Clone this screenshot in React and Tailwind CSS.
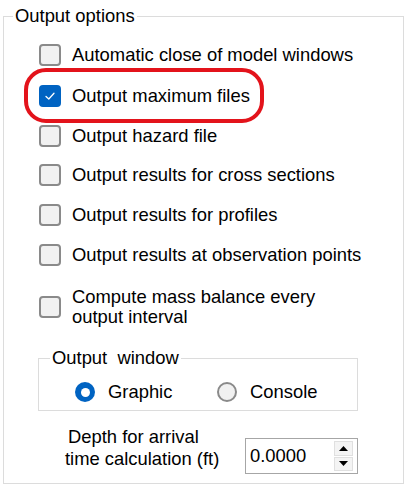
import React from "react";

function CheckBox({ checked }) {
  if (checked) {
    return (
      <span className="flex h-[22px] w-[22px] shrink-0 items-center justify-center rounded-[4px] bg-[#0063c2]">
        <svg width="14" height="14" viewBox="0 0 14 14" fill="none">
          <path d="M3 7.4 L5.8 10 L11 4.2" stroke="#ffffff" strokeWidth="1.3" strokeLinecap="round" strokeLinejoin="round" />
        </svg>
      </span>
    );
  }
  return <span className="block h-[22px] w-[22px] shrink-0 rounded-[4px] border-2 border-[#8a8a8a] bg-[#f1f1f1]" />;
}

function Row({ h, checked, children }) {
  return (
    <div className={`flex items-center ${h}`}>
      <CheckBox checked={checked} />
      <span className="ml-[11px] whitespace-nowrap leading-[22px]">{children}</span>
    </div>
  );
}

function Radio({ checked }) {
  if (checked) {
    return (
      <span className="flex h-[20px] w-[20px] shrink-0 items-center justify-center rounded-full bg-[#0063c2]">
        <span className="block h-[9px] w-[9px] rounded-full bg-white" />
      </span>
    );
  }
  return <span className="block h-[20px] w-[20px] shrink-0 rounded-full border-2 border-[#8a8a8a] bg-[#f1f1f1]" />;
}

export default function App() {
  return (
    <div className="relative h-[488px] w-[419px] overflow-hidden bg-white font-['Liberation_Sans',Arial,sans-serif] text-[18.4px] text-black">
      <div className="pl-[3px] pt-[16px]">
        <div className="relative h-[468px] w-[401px] border border-[#dcdcdc]">
          <span className="absolute left-[9px] top-[-13px] bg-white px-[2px] leading-[24px] whitespace-nowrap">
            Output options
          </span>

          <div className="flex flex-col pl-[35px] pt-[17px]">
            <Row h="h-[41px]">Automatic close of model windows</Row>
            <Row h="h-[41px]" checked>Output maximum files</Row>
            <Row h="h-[39px]">Output hazard file</Row>
            <Row h="h-[40px]">Output results for cross sections</Row>
            <Row h="h-[40px]">Output results for profiles</Row>
            <Row h="h-[40px]">Output results at observation points</Row>
            <div className="mt-[12px] flex h-[40px] items-center">
              <CheckBox />
              <span className="ml-[11px] leading-[20px]">
                Compute mass balance every
                <br />
                output interval
              </span>
            </div>
          </div>

          <div className="relative ml-[34px] mt-[31px] h-[53px] w-[320px] border border-[#dcdcdc]">
            <span className="absolute left-[11px] top-[-13px] bg-white px-[2px] leading-[24px] whitespace-pre">
              {"Output  window"}
            </span>
            <div className="flex items-center pl-[36px] pt-[21px]">
              <div className="flex w-[142px] items-center">
                <Radio checked />
                <span className="ml-[13px] leading-[24px]">Graphic</span>
              </div>
              <div className="flex items-center">
                <Radio />
                <span className="ml-[13px] leading-[24px]">Console</span>
              </div>
            </div>
          </div>

          <div className="mt-[15px] flex items-start">
            <div className="ml-[61px] w-[180px] leading-[22px]">
              <div className="pl-[3px] whitespace-nowrap">Depth for arrival</div>
              <div className="whitespace-nowrap">time calculation (ft)</div>
            </div>
            <div className="mt-[12px] flex h-[36px] w-[113px] items-center border border-[#a6a6a6] bg-white">
              <span className="flex-1 pl-[4px] leading-[24px]">0.0000</span>
              <div className="mr-[4px] flex h-[30px] w-[19px] flex-col gap-[1px]">
                <div className="flex flex-1 items-center justify-center border border-[#e0e0e0] bg-[#f4f4f4]">
                  <svg width="9" height="5" viewBox="0 0 9 5"><path d="M0 5 L4.5 0 L9 5 Z" fill="#000" /></svg>
                </div>
                <div className="flex flex-1 items-center justify-center border border-[#e0e0e0] bg-[#f4f4f4]">
                  <svg width="9" height="5" viewBox="0 0 9 5"><path d="M0 0 L4.5 5 L9 0 Z" fill="#000" /></svg>
                </div>
              </div>
            </div>
          </div>
        </div>
      </div>

      <div className="pointer-events-none absolute left-[24px] top-[68px] h-[55px] w-[240px] rounded-[22px] border-[4px] border-[#e3131b]" />
    </div>
  );
}
